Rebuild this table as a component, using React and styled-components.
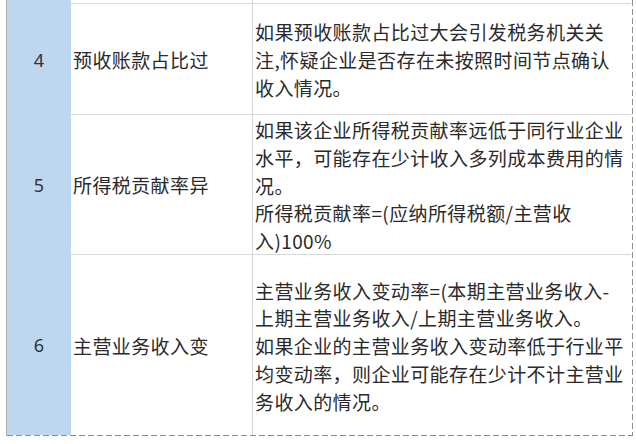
import React from "react";
import styled, { createGlobalStyle } from "styled-components";

const GlobalStyle = createGlobalStyle`
  html, body {
    margin: 0;
    padding: 0;
    background: #ffffff;
    overflow: hidden;
  }
  body {
    font-family: "Noto Sans CJK SC", "Microsoft YaHei", sans-serif;
    color: #2a2a2a;
  }
`;

const Sheet = styled.div`
  width: 625px;
  margin-left: 6px;
  border-left: 1px solid #adadad;
  padding-right: 1px;
  padding-bottom: 1px;
  background:
    repeating-linear-gradient(to right, #8f8f8f 0 6px, transparent 6px 9px) left bottom / 100% 1px no-repeat,
    repeating-linear-gradient(to bottom, #8f8f8f 0 6px, transparent 6px 9px) right top / 1px 100% no-repeat;
`;

const Row = styled.div`
  display: grid;
  grid-template-columns: 64px 182px 378px;
  height: ${(p) => p.$h}px;
`;

const NumCell = styled.div`
  background: #bdd7ee;
  display: flex;
  align-items: center;
  justify-content: center;
  font-family: "Noto Sans", "Noto Sans CJK SC", sans-serif;
  font-size: 18px;
  color: #333333;
`;

const NameCell = styled.div`
  box-sizing: border-box;
  display: flex;
  align-items: center;
  padding-left: 2px;
  border-right: 1px solid #d4d4d4;
  border-bottom: ${(p) => (p.$last ? "none" : "1px solid #d9d9d9")};
  font-size: 19px;
  letter-spacing: 0.4px;
  white-space: nowrap;
  overflow: hidden;
`;

const DescCell = styled.div`
  box-sizing: border-box;
  display: flex;
  flex-direction: column;
  justify-content: center;
  padding-left: 2px;
  padding-top: 2px;
  border-bottom: ${(p) => (p.$last ? "none" : "1px solid #d9d9d9")};
  font-size: 19px;
  letter-spacing: 0.4px;
  line-height: 27.8px;
  overflow: hidden;
`;

const Line = styled.span`
  display: block;
  white-space: nowrap;
`;

const rows = [
  { no: "", name: "", h: 4, lines: [] },
  {
    no: "4",
    name: "预收账款占比过",
    h: 111,
    lines: [
      "如果预收账款占比过大会引发税务机关关",
      "注,怀疑企业是否存在未按照时间节点确认",
      "收入情况。",
    ],
  },
  {
    no: "5",
    name: "所得税贡献率异",
    h: 140,
    lines: [
      "如果该企业所得税贡献率远低于同行业企业",
      "水平，可能存在少计收入多列成本费用的情",
      "况。",
      "所得税贡献率=(应纳所得税额/主营收",
      "入)100%",
    ],
  },
  {
    no: "6",
    name: "主营业务收入变",
    h: 180,
    lines: [
      "主营业务收入变动率=(本期主营业务收入-",
      "上期主营业务收入/上期主营业务收入。",
      "如果企业的主营业务收入变动率低于行业平",
      "均变动率，则企业可能存在少计不计主营业",
      "务收入的情况。",
    ],
  },
];

export default function App() {
  return (
    <>
      <GlobalStyle />
      <Sheet>
        {rows.map((r, i) => {
          const last = i === rows.length - 1;
          return (
            <Row key={i} $h={r.h}>
              <NumCell>{r.no}</NumCell>
              <NameCell $last={last}>{r.name}</NameCell>
              <DescCell $last={last}>
                {r.lines.map((l, j) => (
                  <Line key={j}>{l}</Line>
                ))}
              </DescCell>
            </Row>
          );
        })}
      </Sheet>
    </>
  );
}
